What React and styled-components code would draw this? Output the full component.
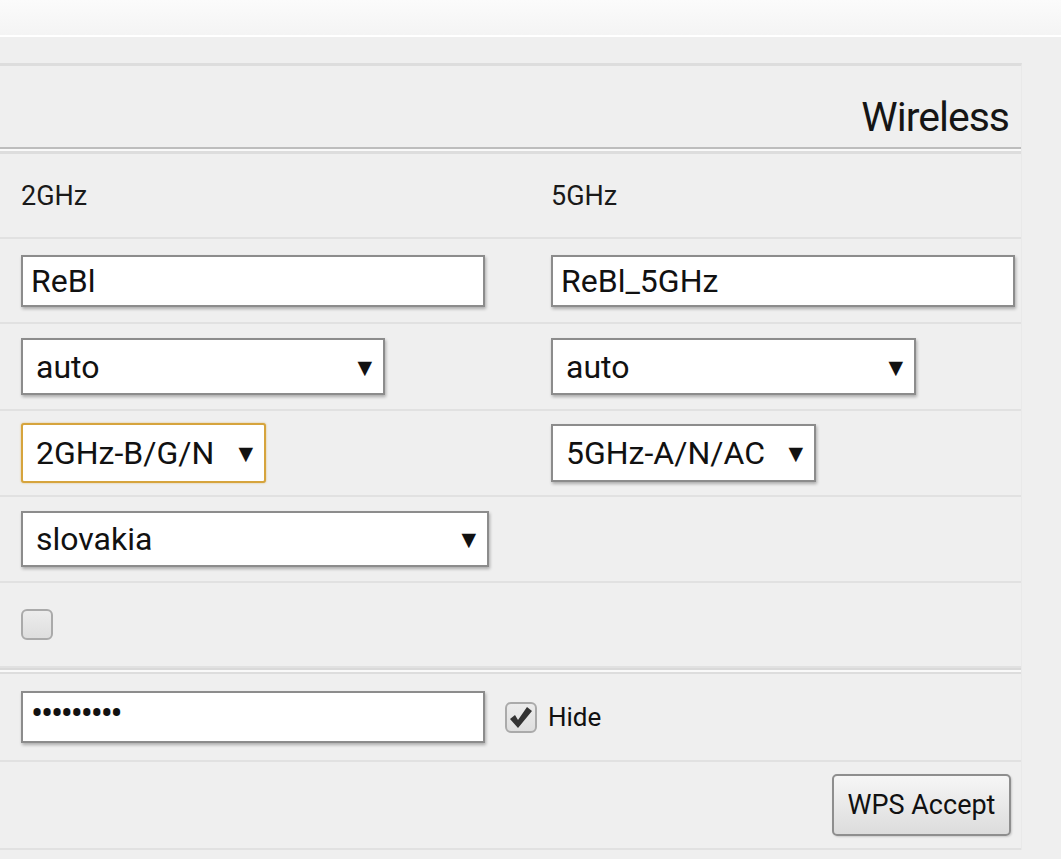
import styled, { createGlobalStyle } from 'styled-components';

const GlobalStyle = createGlobalStyle`
	body {
		margin: 0;
		background: #efefef;
		font-family: Roboto, "Liberation Sans", sans-serif;
		color: #111;
	}
`;

const TopBar = styled.header`
	height: 35px;
	background: linear-gradient(#fbfbfb, #f4f4f4);
	border-bottom: 2px solid #ffffff;
`;

const Panel = styled.main`
	width: 1022px;
	margin-top: 26px;
	border-top: 3px solid #dddddd;
	border-right: 1px solid #e9e9e9;
	box-sizing: border-box;
`;

const TitleRow = styled.div`
	height: 81px;
	box-sizing: border-box;
	padding: 31px 12px 0 0;
	text-align: right;
	font-size: 41px;
	line-height: 1;
	color: #151515;
	letter-spacing: -1px;
`;

const DoubleLine = styled.div`
	height: 2px;
	border-top: 2px solid ${p => p.$dark ? '#bdbdbd' : '#d9d9d9'};
	border-bottom: ${p => p.$dark ? 3 : 2}px solid #dddddd;
	background: #f9f9f9;
`;

const Row = styled.div`
	height: ${p => p.$h}px;
	display: grid;
	grid-template-columns: 530px 1fr;
	align-items: center;
	padding-left: 21px;
	border-bottom: 2px solid #e1e1e1;
`;

const RightRow = styled(Row)`
	display: flex;
	justify-content: flex-end;
	padding-right: 10px;
`;

const Band = styled.span`
	font-size: 27px;
	color: #1a1a1a;
`;

const TextBox = styled.div`
	width: 464px;
	height: 52px;
	flex-shrink: 0;
	box-sizing: border-box;
	background: #fff;
	border: 2px solid #8c8c8c;
	box-shadow: 1px 2px 3px rgba(0, 0, 0, 0.28);
	padding: 0 8px;
	display: flex;
	align-items: center;
	font-size: ${p => p.$dots ? 36 : 32}px;
	letter-spacing: ${p => p.$dots ? '-2.2px' : 'normal'};
	padding-bottom: ${p => p.$dots ? 6 : 0}px;
`;

const Select = styled.div`
	width: ${p => p.$w}px;
	height: ${p => p.$h || 57}px;
	box-sizing: border-box;
	background: #fff;
	border: 2px solid ${p => p.$focus ? '#d6a43d' : '#8c8c8c'};
	border-radius: ${p => p.$focus ? 3 : 0}px;
	box-shadow: ${p => p.$focus ? '0 0 2px rgba(214,164,61,0.7)' : '1px 2px 3px rgba(0, 0, 0, 0.28)'};
	padding: 0 11px 0 13px;
	display: flex;
	align-items: center;
	font-size: 32px;
`;

const Arrow = styled.span`
	margin-left: auto;
	font-size: 19px;
	font-family: "DejaVu Sans", sans-serif;
`;

const CheckWrap = styled.label`
	display: flex;
	align-items: center;
	gap: 11px;
	font-size: 26px;
`;

const Box = styled.span`
	width: 32px;
	height: 31px;
	box-sizing: border-box;
	border: 2px solid #aaaaaa;
	border-radius: 6px;
	background: linear-gradient(#ececec, #dedede);
	display: flex;
	align-items: center;
	justify-content: center;
`;

const PassCell = styled.div`
	grid-column: 1 / -1;
	display: flex;
	align-items: center;
	gap: 20px;
`;

const Button = styled.button`
	width: 179px;
	height: 62px;
	font-family: Roboto, "Liberation Sans", sans-serif;
	font-size: 27px;
	color: #111;
	background: linear-gradient(#f6f6f6, #dcdcdc);
	border: 2px solid #8e8e8e;
	border-radius: 5px;
	box-shadow: 1px 1px 2px rgba(0, 0, 0, 0.15);
`;

function Check({ checked }) {
	return (
		<Box>
			{checked && (
				<svg width="24" height="24" viewBox="0 0 24 24">
					<path d="M1 14 L6 10 L9 15 L18 2 L23 6 L9 23 Z" fill="#333" />
				</svg>
			)}
		</Box>
	);
}

function App() {
	return (
		<>
			<GlobalStyle />
			<TopBar />
			<Panel>
				<TitleRow>Wireless</TitleRow>
				<DoubleLine $dark />
				<Row $h={83}>
					<Band>2GHz</Band>
					<Band>5GHz</Band>
				</Row>
				<Row $h={83}>
					<TextBox>ReBl</TextBox>
					<TextBox>ReBl_5GHz</TextBox>
				</Row>
				<Row $h={85}>
					<Select $w={364}>auto<Arrow>▼</Arrow></Select>
					<Select $w={365}>auto<Arrow>▼</Arrow></Select>
				</Row>
				<Row $h={84}>
					<Select $w={245} $h={60} $focus>2GHz-B/G/N<Arrow>▼</Arrow></Select>
					<Select $w={265} $h={58}>5GHz-A/N/AC<Arrow>▼</Arrow></Select>
				</Row>
				<Row $h={84}>
					<Select $w={468} $h={56}>slovakia<Arrow>▼</Arrow></Select>
				</Row>
				<Row $h={83}>
					<Check />
				</Row>
				<DoubleLine />
				<Row $h={86}>
					<PassCell>
						<TextBox $dots>•••••••••</TextBox>
						<CheckWrap><Check checked />Hide</CheckWrap>
					</PassCell>
				</Row>
				<RightRow $h={86}>
					<Button>WPS Accept</Button>
				</RightRow>
			</Panel>
		</>
	);
}

export default App;
